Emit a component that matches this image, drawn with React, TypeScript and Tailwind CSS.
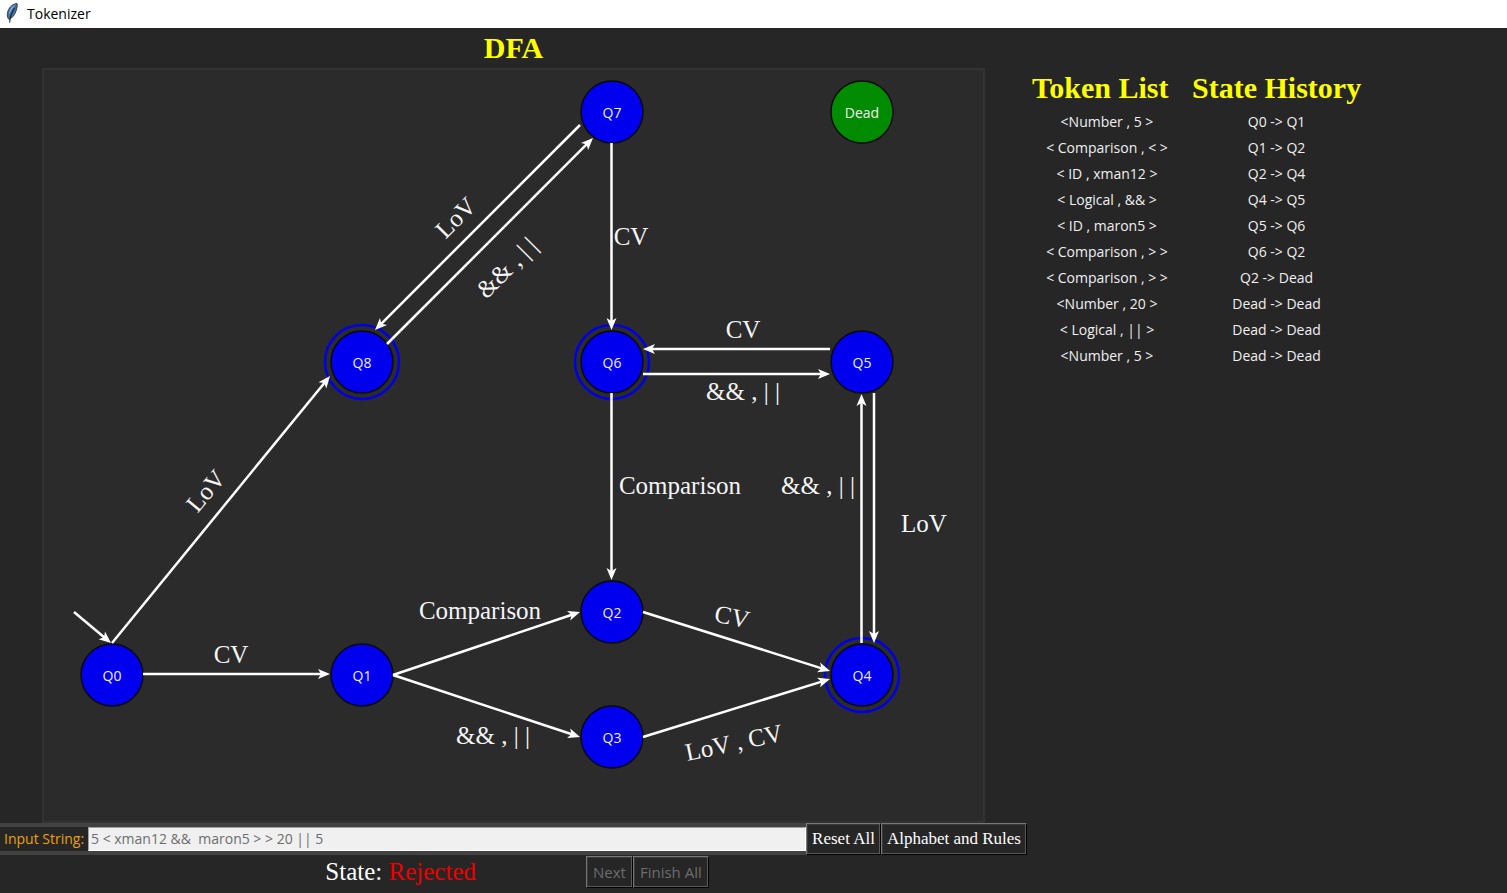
import React from "react";

type State = { name: string; x: number; y: number; accept?: boolean; active?: boolean };
type Edge = [number, number, number, number];
type Label = { text: string; x: number; y: number; angle?: number };

const states: State[] = [
  { name: "Q0", x: 112, y: 675 },
  { name: "Q1", x: 362, y: 675 },
  { name: "Q2", x: 612, y: 612 },
  { name: "Q3", x: 612, y: 737 },
  { name: "Q4", x: 862, y: 675, accept: true },
  { name: "Q5", x: 862, y: 362 },
  { name: "Q6", x: 612, y: 362, accept: true },
  { name: "Q7", x: 612, y: 112 },
  { name: "Q8", x: 362, y: 362, accept: true },
  { name: "Dead", x: 862, y: 112, active: true },
];

const edges: Edge[] = [
  [74, 612, 111, 643],
  [143, 674, 330, 674],
  [112, 643, 330, 376],
  [393, 675, 580, 612],
  [393, 675, 580, 737],
  [643, 612, 830, 671],
  [643, 737, 830, 679],
  [861.5, 643, 861.5, 394],
  [874, 393, 874, 643],
  [830, 349, 643, 349],
  [643, 374, 830, 374],
  [611.5, 393, 611.5, 580],
  [611.5, 143, 611.5, 330],
  [580, 125, 375, 330],
  [387, 344, 593, 138],
];

const labels: Label[] = [
  { text: "CV", x: 231, y: 655 },
  { text: "LoV", x: 206, y: 491, angle: -50 },
  { text: "Comparison", x: 480, y: 611 },
  { text: "&& , | |", x: 493, y: 736 },
  { text: "CV", x: 732, y: 617, angle: 12 },
  { text: "LoV , CV", x: 734, y: 743, angle: -12 },
  { text: "LoV", x: 924, y: 524 },
  { text: "&& , | |", x: 818, y: 486 },
  { text: "CV", x: 743, y: 330 },
  { text: "&& , | |", x: 743, y: 392 },
  { text: "Comparison", x: 680, y: 486 },
  { text: "CV", x: 631, y: 237 },
  { text: "LoV", x: 456, y: 218, angle: -45 },
  { text: "&& , | |", x: 507, y: 268, angle: -45 },
];

const history: [string, string][] = [
  ["<Number , 5 >", "Q0 -> Q1"],
  ["< Comparison , < >", "Q1 -> Q2"],
  ["< ID , xman12 >", "Q2 -> Q4"],
  ["< Logical , && >", "Q4 -> Q5"],
  ["< ID , maron5 >", "Q5 -> Q6"],
  ["< Comparison , > >", "Q6 -> Q2"],
  ["< Comparison , > >", "Q2 -> Dead"],
  ["<Number , 20 >", "Dead -> Dead"],
  ["< Logical , || >", "Dead -> Dead"],
  ["<Number , 5 >", "Dead -> Dead"],
];

function Arrow({ edge }: { edge: Edge }) {
  const [x1, y1, x2, y2] = edge;
  const length = Math.hypot(x2 - x1, y2 - y1);
  const angle = (Math.atan2(y2 - y1, x2 - x1) * 180) / Math.PI;
  return (
    <g transform={`translate(${x1} ${y1}) rotate(${angle})`}>
      <path d={`M0 0H${length - 7}`} stroke="#fff" strokeWidth="2.5" />
      <path d={`M${length} 0l-12 -5l3 5l-3 5z`} fill="#fff" />
    </g>
  );
}

function Diagram() {
  return (
    <svg viewBox="42 68 943 755" className="block h-auto w-full" role="img" aria-label="DFA">
      <rect x="43" y="69" width="941" height="753" fill="#2b2b2b" stroke="#333333" strokeWidth="2" />
      {states.map((s) => (
        <g key={s.name}>
          {s.accept && <circle cx={s.x} cy={s.y} r="37" fill="none" stroke="#0000e8" strokeWidth="2.5" />}
          <circle cx={s.x} cy={s.y} r="31" fill={s.active ? "#008b00" : "#0000ee"} stroke="#0a0a0a" strokeWidth="1.5" />
          <text
            x={s.x}
            y={s.y + 6}
            textAnchor="middle"
            className="fill-[#f0f0f0] font-['Open_Sans',sans-serif] text-[14px]"
          >
            {s.name}
          </text>
        </g>
      ))}
      {edges.map((edge) => (
        <Arrow key={edge.join()} edge={edge} />
      ))}
      {labels.map((l) => (
        <text
          key={`${l.x},${l.y}`}
          transform={`translate(${l.x} ${l.y}) rotate(${l.angle ?? 0})`}
          y="8"
          textAnchor="middle"
          className="fill-[#f5f5f5] font-['Liberation_Serif',serif] text-[25px]"
        >
          {l.text}
        </text>
      ))}
    </svg>
  );
}

function Feather() {
  return (
    <svg viewBox="0 0 12 20" className="h-5 w-3" aria-hidden="true">
      <path d="M11 0.5C7 0.8 3.4 4 2 8C0.8 11.5 1 14.5 3 16.5C6.5 15 8.8 11.5 10 8C11 5 11.6 2.5 11 0.5Z" fill="#3f6fa8" stroke="#3a3f47" strokeWidth="1" />
      <path d="M9.5 1.8C6.5 2.8 4.3 5.5 3.2 9L2.8 12C4.5 8.5 6.5 5 9.5 1.8Z" fill="#8bb4de" />
      <path d="M8.5 5C6.5 8 4.2 12.5 3.6 19.5" fill="none" stroke="#1c2530" strokeWidth="1.2" />
    </svg>
  );
}

function ToolButton({ children, disabled }: { children: string; disabled?: boolean }) {
  return (
    <button
      type="button"
      disabled={disabled}
      className={
        "h-8 border border-t-[#787878] border-r-black border-b-black border-l-[#787878] bg-[#262626] whitespace-nowrap shadow-[inset_-1px_-1px_0_#5a5a5a,inset_1px_1px_0_#3a3a3a] " +
        (disabled
          ? "px-1.5 text-[15px] text-[#6d6d6d]"
          : "px-[5px] font-['Liberation_Serif',serif] text-[17px] text-white")
      }
    >
      {children}
    </button>
  );
}

export default function App() {
  return (
    <div className="flex min-h-screen flex-col bg-[#262626] font-['Open_Sans',sans-serif] text-[14px] text-[#f0f0f0]">
      <header className="flex h-7 items-center gap-[9px] bg-white px-1.5 pb-0.5 text-black">
        <Feather />
        <span>Tokenizer</span>
      </header>

      <main className="grid flex-1 grid-cols-[minmax(0,1027fr)_minmax(0,480fr)]">
        <section className="flex flex-col">
          <h1 className="text-center font-['Liberation_Serif',serif] text-[30px] leading-10 font-bold text-[#ffff00]">
            DFA
          </h1>
          <div className="mx-auto w-full max-w-[943px]">
            <Diagram />
          </div>

          <form className="flex h-8" onSubmit={(e) => e.preventDefault()}>
            <div className="flex flex-1 border-y-4 border-[#424242]">
              <label htmlFor="source" className="w-[88px] pl-1 leading-6 whitespace-nowrap text-[#f0a000]">
                Input String:
              </label>
              <input
                id="source"
                type="text"
                disabled
                defaultValue="5 < xman12 &&  maron5 > > 20 || 5"
                className="min-w-0 flex-1 border border-t-[#a0a0a0] border-r-white border-b-white border-l-[#a0a0a0] bg-[#f0f0f0] px-0.5 pb-0.5 text-[#6d6d6d]"
              />
            </div>
            <ToolButton>Reset All</ToolButton>
            <ToolButton>Alphabet and Rules</ToolButton>
          </form>

          <div className="grid grid-cols-[minmax(0,586fr)_minmax(0,441fr)] items-center pt-px">
            <p className="pr-[110px] text-right font-['Liberation_Serif',serif] text-[25px] leading-8 text-white">
              State: <span className="text-[#ee0000]">Rejected</span>
            </p>
            <div className="flex">
              <ToolButton disabled>Next</ToolButton>
              <ToolButton disabled>Finish All</ToolButton>
            </div>
          </div>
        </section>

        <aside className="pt-10 pl-[5px]">
          <table className="border-collapse">
            <thead className="font-['Liberation_Serif',serif] text-[30px] leading-10 text-[#ffff00]">
              <tr>
                <th className="w-[160px] p-0 text-left font-bold whitespace-nowrap">Token List</th>
                <th className="p-0 font-bold whitespace-nowrap">State History</th>
              </tr>
            </thead>
            <tbody>
              {history.map(([token, step], i) => (
                <tr key={i} className="h-[26px]">
                  <td className="p-0 pr-2.5 text-center whitespace-nowrap">{token}</td>
                  <td className="p-0 text-center whitespace-nowrap">{step}</td>
                </tr>
              ))}
            </tbody>
          </table>
        </aside>
      </main>
    </div>
  );
}
